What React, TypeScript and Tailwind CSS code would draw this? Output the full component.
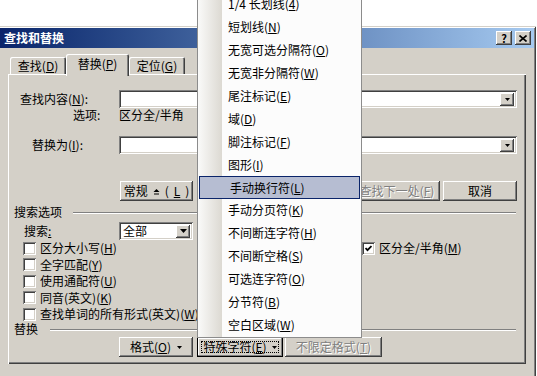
import React from "react";

const raised =
  "shadow-[inset_-1px_-1px_0_#404040,inset_1px_1px_0_#ffffff,inset_-2px_-2px_0_#808080,inset_2px_2px_0_#d4d0c8]";
const sunken =
  "shadow-[inset_1px_1px_0_#808080,inset_-1px_-1px_0_#ffffff,inset_2px_2px_0_#404040,inset_-2px_-2px_0_#d4d0c8]";
const disabledText = "text-[#808080] [text-shadow:1px_1px_0_#ffffff]";

const menuItems: [string, string][] = [
  ["1/4 长划线", "4"],
  ["短划线", "N"],
  ["无宽可选分隔符", "O"],
  ["无宽非分隔符", "W"],
  ["尾注标记", "E"],
  ["域", "D"],
  ["脚注标记", "F"],
  ["图形", "I"],
  ["手动换行符", "L"],
  ["手动分页符", "K"],
  ["不间断连字符", "H"],
  ["不间断空格", "S"],
  ["可选连字符", "O"],
  ["分节符", "B"],
  ["空白区域", "W"],
];

function Key({ t, k, tail = "" }: { t: string; k: string; tail?: string }) {
  return (
    <span className="whitespace-nowrap">
      {t}(<u className="underline-offset-[1px]">{k}</u>){tail}
    </span>
  );
}

function DownArrow({ big = false }: { big?: boolean }) {
  return big ? (
    <svg width="7" height="4" viewBox="0 0 7 4">
      <polygon points="0,0 7,0 3.5,4" fill="#000" />
    </svg>
  ) : (
    <svg width="5" height="3" viewBox="0 0 5 3">
      <polygon points="0,0 5,0 2.5,3" fill="#000" />
    </svg>
  );
}

function Combo() {
  return (
    <div className={`flex h-[18px] w-[398px] items-center justify-end bg-white pr-[3px] ${sunken}`}>
      <div className={`flex h-[13px] w-[14px] items-center justify-center bg-[#d4d0c8] ${raised}`}>
        <DownArrow />
      </div>
    </div>
  );
}

function Btn({
  w,
  disabled = false,
  children,
}: {
  w: string;
  disabled?: boolean;
  children: React.ReactNode;
}) {
  return (
    <div
      className={`flex h-[20px] items-center justify-center bg-[#d4d0c8] ${w} ${raised} ${
        disabled ? disabledText : ""
      }`}
    >
      {children}
    </div>
  );
}

function Check({ checked = false }: { checked?: boolean }) {
  return (
    <div className={`flex h-[13px] w-[13px] shrink-0 items-center justify-center bg-white ${sunken}`}>
      {checked && (
        <svg width="7" height="7" viewBox="0 0 7 7">
          <polyline points="0.5,3 2.5,5.2 6.5,1" fill="none" stroke="#000" strokeWidth="1.8" />
        </svg>
      )}
    </div>
  );
}

function CheckRow({ children, right }: { children: React.ReactNode; right?: React.ReactNode }) {
  return (
    <div className="flex h-[16.5px] items-center pl-[15px]">
      <div className="flex w-[339px] items-center gap-[4px]">
        <Check />
        {children}
      </div>
      {right}
    </div>
  );
}

function Etched({ w }: { w: string }) {
  return <div className={`h-px bg-[#808080] shadow-[0_1px_0_#ffffff] ${w}`} />;
}

export default function App() {
  return (
    <div className="relative h-[376px] w-[537px] overflow-hidden bg-white font-['Noto_Sans_CJK_SC',sans-serif] text-[12px] leading-[14px] text-black">
      <div className="h-[26px]" />

      {/* dialog */}
      <div className="ml-[-2px] w-[538px] bg-[#d4d0c8] p-[2px] shadow-[inset_1px_1px_0_#d4d0c8,inset_-1px_-1px_0_#404040,inset_2px_2px_0_#ffffff,inset_-2px_-2px_0_#808080]">
        <div className="flex h-[20px] items-center bg-gradient-to-r from-[#0a246a] to-[#a6caf0] pl-[4px] pr-[3px]">
          <span className="font-bold text-white">查找和替换</span>
          <div className="ml-auto flex gap-[3px]">
            <div className={`flex h-[14px] w-[16px] items-center justify-center bg-[#d4d0c8] text-[11px] font-bold leading-[11px] ${raised}`}>
              ?
            </div>
            <div className={`flex h-[14px] w-[16px] items-center justify-center bg-[#d4d0c8] ${raised}`}>
              <svg width="8" height="7" viewBox="0 0 8 7">
                <path d="M0.5 0.5 L7.5 6.5 M7.5 0.5 L0.5 6.5" stroke="#000" strokeWidth="1.6" />
              </svg>
            </div>
          </div>
        </div>

        <div className="h-[323px]">
          {/* tabs */}
          <div className="mt-[6px] flex h-[20px] items-end pl-[10px]">
            <div className="flex h-[17px] w-[56px] items-center justify-center rounded-t-[2px] shadow-[inset_1px_1px_0_#ffffff,inset_-1px_0_0_#404040,inset_-2px_0_0_#808080]">
              <Key t="查找" k="D" />
            </div>
            <div className="relative z-10 mb-[-2px] flex h-[22px] w-[63px] items-center justify-center rounded-t-[2px] bg-[#d4d0c8] pb-[2px] shadow-[inset_1px_1px_0_#ffffff,inset_-1px_0_0_#404040,inset_-2px_0_0_#808080]">
              <Key t="替换" k="P" />
            </div>
            <div className="flex h-[17px] w-[56px] items-center justify-center rounded-t-[2px] shadow-[inset_1px_1px_0_#ffffff,inset_-1px_0_0_#404040,inset_-2px_0_0_#808080]">
              <Key t="定位" k="G" />
            </div>
          </div>

          {/* panel */}
          <div className="ml-[8px] flex h-[290px] w-[518px] flex-col shadow-[inset_1px_1px_0_#ffffff,inset_-1px_-1px_0_#404040,inset_-2px_-2px_0_#808080]">
            <div className="mt-[16px] flex h-[18px] items-center">
              <div className="w-[111px] pl-[12px]">
                <Key t="查找内容" k="N" tail=":" />
              </div>
              <Combo />
            </div>
            <div className="flex h-[14px] items-center">
              <div className="w-[111px] pl-[65px]">选项:</div>
              <div>区分全/半角</div>
            </div>
            <div className="mt-[14px] flex h-[18px] items-center">
              <div className="w-[111px] pl-[24px]">
                <Key t="替换为" k="I" tail=":" />
              </div>
              <Combo />
            </div>

            <div className="mt-[27px] flex h-[20px] pr-[9px]">
              <div className="ml-[112px]">
                <Btn w="w-[73px]">
                  <span className="flex items-center gap-[5px]">
                    常规
                    <svg width="7" height="7" viewBox="0 0 7 7">
                      <polygon points="0.5,4 3.5,1 6.5,4" fill="#000" />
                      <rect x="1" y="5.5" width="5" height="1" fill="#000" />
                    </svg>
                    (<u>L</u>)
                  </span>
                </Btn>
              </div>
              <div className="ml-auto flex gap-[3px]">
                <Btn w="w-[86px]" disabled>
                  <Key t="查找下一处" k="F" />
                </Btn>
                <Btn w="w-[74px]">取消</Btn>
              </div>
            </div>

            <div className="mt-[4px] flex h-[14px] items-center pl-[6px]">
              <span>搜索选项</span>
              <div className="ml-[11px]">
                <Etched w="w-[443px]" />
              </div>
            </div>

            <div className="mt-[3px] flex h-[18px] items-center">
              <div className="w-[111px] pl-[16px]">
                搜索<u>:</u>
              </div>
              <div className={`flex h-[18px] w-[74px] items-center bg-white pl-[4px] pr-[3px] ${sunken}`}>
                <span>全部</span>
                <div className={`ml-auto flex h-[13px] w-[14px] items-center justify-center bg-[#d4d0c8] ${raised}`}>
                  <DownArrow big />
                </div>
              </div>
            </div>

            <CheckRow
              right={
                <div className="flex items-center gap-[4px]">
                  <Check checked />
                  <Key t="区分全/半角" k="M" />
                </div>
              }
            >
              <Key t="区分大小写" k="H" />
            </CheckRow>
            <CheckRow>
              <Key t="全字匹配" k="Y" />
            </CheckRow>
            <CheckRow>
              <Key t="使用通配符" k="U" />
            </CheckRow>
            <CheckRow>
              <Key t="同音(英文)" k="K" />
            </CheckRow>
            <CheckRow>
              <Key t="查找单词的所有形式(英文)" k="W" />
            </CheckRow>

            <div className="flex h-[13px] items-center pl-[6px]">
              <span>替换</span>
              <div className="ml-[12px]">
                <Etched w="w-[466px]" />
              </div>
            </div>

            <div className="mt-[1.5px] flex h-[20px] pl-[111px]">
              <Btn w="w-[74px]">
                <span className="flex items-center gap-[6px]">
                  <Key t="格式" k="O" />
                  <DownArrow />
                </span>
              </Btn>
              <div className="ml-[4px] flex h-[20px] w-[86px] bg-[#d4d0c8] shadow-[inset_0_0_0_1px_#000000,inset_-2px_-2px_0_#808080,inset_2px_2px_0_#ffffff]">
                <div className="m-[4px] flex flex-1 items-center justify-center gap-[5px] border border-dotted border-black">
                  <Key t="特殊字符" k="E" />
                  <DownArrow />
                </div>
              </div>
              <div className="ml-[2px]">
                <Btn w="w-[97px]" disabled>
                  <Key t="不限定格式" k="T" />
                </Btn>
              </div>
            </div>
          </div>
        </div>
      </div>
      <div className="h-[3px] bg-[#d4d0c8]" />

      {/* special character popup menu */}
      <div className="absolute left-[197px] top-[-9px] w-[165px] border border-[#8c8c8c] bg-[#fcfcfc] py-px">
        <div className="absolute bottom-0 left-0 top-0 w-[24px] bg-gradient-to-r from-[#fafaf9] to-[#dcd9d2]" />
        {menuItems.map(([t, k], i) => (
          <div
            key={i}
            className={`relative flex h-[22.9px] items-center pl-[30px] ${
              i === 8 ? "mx-px border border-[#0a246a] bg-[#b6bdd2] pl-[28px]" : ""
            }`}
          >
            <Key t={t} k={k} />
          </div>
        ))}
      </div>
    </div>
  );
}
